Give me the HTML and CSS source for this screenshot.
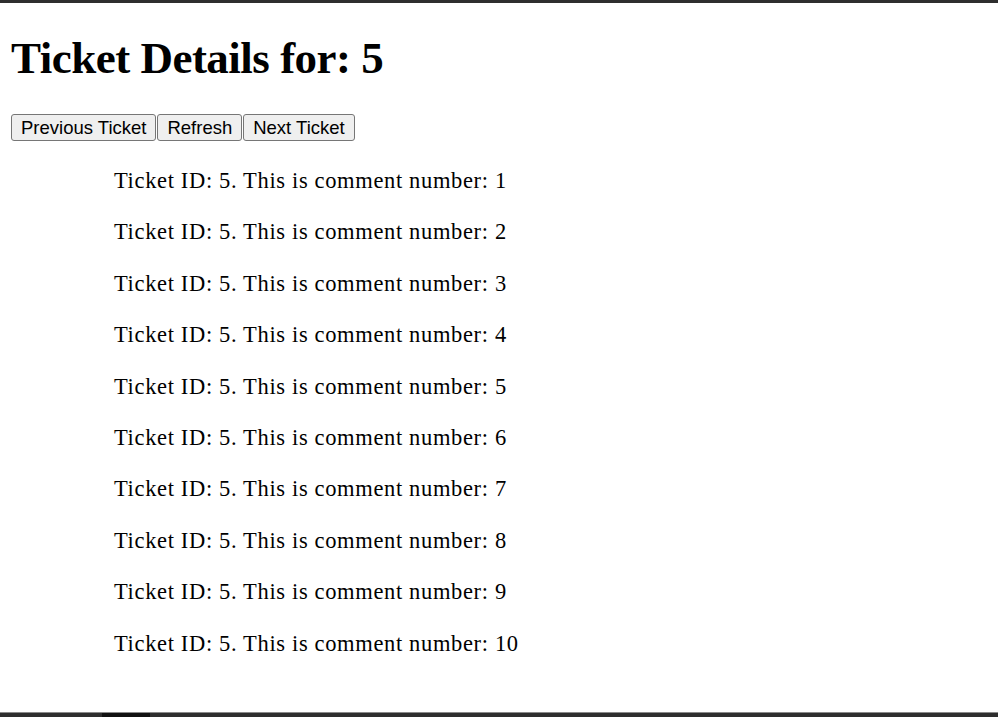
FILE: index.html
```html
<!DOCTYPE html>
<html>
<head>
<meta charset="utf-8">
<title>Ticket Details</title>
<link rel="stylesheet" href="styles.css">
</head>
<body>
<div class="frame">
  <div class="bar-top"></div>
  <main class="page">
    <h1 class="title">Ticket Details for: 5</h1>
    <div class="actions"><button class="btn">Previous Ticket</button><button class="btn">Refresh</button><button class="btn">Next Ticket</button></div>
    <div class="comments">
      <p class="comment">Ticket ID: 5. This is comment number: 1</p>
      <p class="comment">Ticket ID: 5. This is comment number: 2</p>
      <p class="comment">Ticket ID: 5. This is comment number: 3</p>
      <p class="comment">Ticket ID: 5. This is comment number: 4</p>
      <p class="comment">Ticket ID: 5. This is comment number: 5</p>
      <p class="comment">Ticket ID: 5. This is comment number: 6</p>
      <p class="comment">Ticket ID: 5. This is comment number: 7</p>
      <p class="comment">Ticket ID: 5. This is comment number: 8</p>
      <p class="comment">Ticket ID: 5. This is comment number: 9</p>
      <p class="comment">Ticket ID: 5. This is comment number: 10</p>
    </div>
  </main>
  <div class="bar-bottom"><span class="bar-seg"></span></div>
</div>
</body>
</html>
```

FILE: styles.css
```css
html, body {
  margin: 0;
  padding: 0;
  background: #ffffff;
}

.frame {
  height: 100vh;
  display: flex;
  flex-direction: column;
  overflow: hidden;
}

.bar-top {
  height: 3px;
  background: #2e2e2e;
  flex: none;
}

.page {
  flex: 1;
  padding-left: 11px;
  font-family: "Liberation Serif", "Times New Roman", serif;
  color: #000;
}

.title {
  margin: 29px 0 0 0;
  font-size: 45px;
  line-height: 52px;
  font-weight: bold;
  letter-spacing: -0.5px;
}

.actions {
  display: flex;
  gap: 1px;
  margin-top: 30px;
}

.btn {
  font-family: "Liberation Sans", Arial, sans-serif;
  font-size: 18.5px;
  line-height: 21px;
  height: 27px;
  padding: 0 9px;
  border: 1px solid #767676;
  border-radius: 3px;
  background: #efefef;
  color: #000;
}

.comments {
  display: flex;
  flex-direction: column;
  gap: 25.4px;
  margin-top: 27px;
  padding-left: 103px;
}

.comment {
  margin: 0;
  font-size: 22.5px;
  line-height: 26px;
  letter-spacing: 0.65px;
}

.bar-bottom {
  height: 4px;
  flex: none;
  background: #2e2e2e;
  border-top: 1px solid #8a8a8a;
  display: flex;
}

.bar-seg {
  margin-left: 102px;
  width: 48px;
  background: #111;
}
```
